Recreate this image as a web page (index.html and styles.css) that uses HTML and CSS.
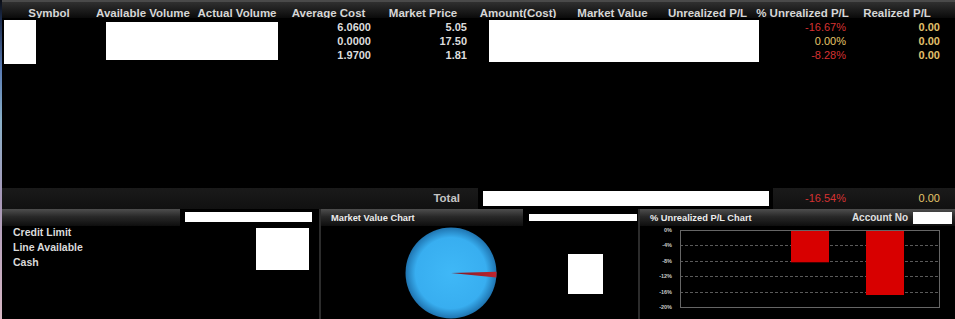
FILE: index.html
```html
<!DOCTYPE html>
<html lang="en">
<head>
    <meta charset="UTF-8">
    <meta name="viewport" content="width=device-width, initial-scale=1.0">
    <title>Portfolio</title>
    <link rel="stylesheet" href="styles.css">
</head>
<body>
<div class="app">

    <div class="cols thead">
        <div class="th">Symbol</div>
        <div class="th th-left">Available Volume</div>
        <div class="th">Actual Volume</div>
        <div class="th">Average Cost</div>
        <div class="th">Market Price</div>
        <div class="th">Amount(Cost)</div>
        <div class="th">Market Value</div>
        <div class="th">Unrealized P/L</div>
        <div class="th">% Unrealized P/L</div>
        <div class="th">Realized P/L</div>
    </div>

    <div class="cols tbody">
        <div class="mask mask-symbol"></div>
        <div class="mask mask-volume"></div>
        <div class="mask mask-amount"></div>

        <div class="num">6.0600</div>
        <div class="num">5.05</div>
        <div class="num neg">-16.67%</div>
        <div class="num gold">0.00</div>

        <div class="num">0.0000</div>
        <div class="num">17.50</div>
        <div class="num gold light">0.00%</div>
        <div class="num gold">0.00</div>

        <div class="num">1.9700</div>
        <div class="num">1.81</div>
        <div class="num neg">-8.28%</div>
        <div class="num gold">0.00</div>
    </div>

    <div class="cols total">
        <div class="total-label">Total</div>
        <div class="total-box"><div class="fill"></div></div>
        <div class="num neg">-16.54%</div>
        <div class="num gold light">0.00</div>
    </div>

    <div class="panels">
        <div class="panel p1">
            <div class="phead">
                <div class="bar"></div>
                <div class="slot slot-1"><div class="fill"></div></div>
            </div>
            <div class="pbody">
                <div class="labels">
                    <div>Credit Limit</div>
                    <div>Line Available</div>
                    <div>Cash</div>
                </div>
                <div class="fill box-credit"></div>
            </div>
        </div>

        <div class="panel p2">
            <div class="phead">
                <div class="bar bar-2">Market Value Chart</div>
                <div class="slot slot-2"><div class="fill"></div></div>
            </div>
            <div class="pbody">
                <svg class="pie" width="92" height="92" viewBox="0 0 92 92">
                    <defs>
                        <radialGradient id="pieFill" cx="50%" cy="50%" r="50%">
                            <stop offset="0" stop-color="#3fb8f7"/>
                            <stop offset="0.78" stop-color="#38aef0"/>
                            <stop offset="1" stop-color="#1f74b0"/>
                        </radialGradient>
                        <linearGradient id="sliceFill" x1="0" y1="0" x2="1" y2="0">
                            <stop offset="0" stop-color="#7a1a26"/>
                            <stop offset="1" stop-color="#c0242e"/>
                        </linearGradient>
                    </defs>
                    <circle cx="46" cy="46" r="45.5" fill="url(#pieFill)"/>
                    <path d="M46 46 L91.5 44.8 A45.5 45.5 0 0 1 91.2 50.5 Z" fill="url(#sliceFill)"/>
                </svg>
                <div class="fill box-pie"></div>
            </div>
        </div>

        <div class="panel p3">
            <div class="phead">
                <div class="bar bar-3">
                    <span>% Unrealized P/L Chart</span>
                    <span class="acct">Account No</span>
                    <div class="fill box-acct"></div>
                </div>
            </div>
            <div class="pbody">
                <div class="axis">
                    <div>0%</div>
                    <div>-4%</div>
                    <div>-8%</div>
                    <div>-12%</div>
                    <div>-16%</div>
                    <div>-20%</div>
                </div>
                <svg class="plot" width="262" height="80" viewBox="0 0 262 80">
                    <g stroke="#5a5a5a" stroke-width="1" stroke-dasharray="3 2">
                        <line x1="1" y1="16.5" x2="261" y2="16.5"/>
                        <line x1="1" y1="32.5" x2="261" y2="32.5"/>
                        <line x1="1" y1="47.5" x2="261" y2="47.5"/>
                        <line x1="1" y1="63.5" x2="261" y2="63.5"/>
                    </g>
                    <rect x="112" y="1" width="38" height="32.3" fill="#d80000"/>
                    <rect x="187" y="1" width="38" height="65" fill="#d80000"/>
                    <rect x="1.5" y="1.5" width="259" height="77" fill="none" stroke="#666"/>
                </svg>
            </div>
        </div>
    </div>

</div>
</body>
</html>
```

FILE: styles.css
```css
body {
    margin: 0;
    background: #000;
    font-family: "Liberation Sans", Arial, sans-serif;
    overflow: hidden;
}

.app {
    width: 955px;
    height: 319px;
    box-sizing: border-box;
    overflow: hidden;
    border-left: 2px solid;
    border-image: linear-gradient(#0a0c12 0, #1a2a4a 6%, #5a7cb4 22%, #8ab0c8 38%, #a898b8 62%, #d8b8c4 100%) 1;
}

.cols {
    display: grid;
    grid-template-columns: 94px 96px 90px 93px 96px 94px 95px 95px 95px 94px;
}

/* table header */
.thead {
    height: 16px;
    border-top: 2px solid #4a4a4a;
    background: linear-gradient(#303030, #0a0a0a);
    overflow: hidden;
    line-height: 22.5px;
    font-size: 11.5px;
    font-weight: bold;
    color: #d6d6d6;
}

.th {
    text-align: center;
    white-space: nowrap;
    overflow: hidden;
}

.th-left {
    text-align: left;
}

/* table rows */
.tbody {
    height: 170px;
    box-sizing: border-box;
    padding-top: 2px;
    grid-template-rows: repeat(3, 14px);
    align-content: start;
    font-size: 11px;
    font-weight: bold;
    line-height: 14px;
    color: #dcdcdc;
}

.num {
    text-align: right;
    padding-right: 4px;
    white-space: nowrap;
}

.neg {
    color: #d63232;
    font-weight: normal;
}

.gold {
    color: #e2c06c;
}

.gold.light {
    font-weight: normal;
    color: #e6c66a;
}

.mask,
.fill {
    background: #fff;
}

.mask {
    grid-row: 1 / span 3;
    align-self: start;
}

.mask-symbol {
    grid-column: 1;
    width: 32px;
    height: 44px;
    margin-left: 2px;
}

.mask-volume {
    grid-column: 2 / span 2;
    width: 172px;
    height: 38px;
    margin: 2px 0 0 10px;
}

.mask-amount {
    grid-column: 6 / span 3;
    width: 270px;
    height: 42px;
    margin-left: 18px;
}

/* total row */
.total {
    height: 21px;
    background: linear-gradient(#1a1a1a, #111);
    line-height: 21px;
    font-size: 11px;
    color: #ccc;
}

.total-label {
    grid-column: 5;
    text-align: right;
    padding-right: 11px;
    font-size: 11.5px;
    font-weight: bold;
    color: #c4c4c4;
}

.total-box {
    grid-column: 6 / span 3;
    width: 295px;
    height: 23px;
    margin: -1px 0 0 7px;
    box-sizing: border-box;
    padding: 4px 4px 4px 5px;
    background: #000;
}

.total-box .fill {
    height: 100%;
}

/* bottom panels */
.panels {
    display: flex;
    height: 110px;
}

.panel {
    display: flex;
    flex-direction: column;
    box-sizing: border-box;
}

.p1 {
    width: 317px;
}

.p2 {
    width: 319px;
    border-left: 2px solid #2c2c2c;
}

.p3 {
    flex: 1;
    border-left: 2px solid #2c2c2c;
}

.phead {
    display: flex;
    height: 17px;
}

.bar {
    flex: 1;
    display: flex;
    align-items: center;
    padding-left: 10px;
    background: linear-gradient(#4e4e4e, #282828 45%, #0e0e0e);
    font-size: 9.3px;
    font-weight: bold;
    color: #ececec;
    white-space: nowrap;
}

.bar-2 {
    flex: none;
    width: 192px;
}

.slot {
    background: #000;
}

.slot-1 {
    width: 139px;
}

.slot-1 .fill {
    width: 127px;
    height: 10px;
    margin: 3px 0 0 5px;
}

.slot-2 {
    flex: 1;
}

.slot-2 .fill {
    width: 108px;
    height: 7px;
    margin: 5px 0 0 6px;
}

.acct {
    margin-left: auto;
    font-size: 10px;
    color: #e0e0e0;
}

.box-acct {
    width: 39px;
    height: 12px;
    margin: 0 3px 0 5px;
}

.pbody {
    flex: 1;
    display: flex;
    align-items: flex-start;
}

.labels {
    margin: -1.5px 0 0 11px;
    font-size: 10.5px;
    font-weight: bold;
    line-height: 15.25px;
    color: #dadada;
}

.box-credit {
    width: 53px;
    height: 42px;
    margin: 2px 10px 0 auto;
}

.pie {
    margin: 1px 0 0 84px;
}

.box-pie {
    width: 35px;
    height: 40px;
    margin: 28px 0 0 71px;
}

.axis {
    width: 32px;
    height: 85px;
    margin-top: 0.5px;
    padding-right: 4px;
    display: flex;
    flex-direction: column;
    justify-content: space-between;
    text-align: right;
    font-size: 5.5px;
    font-weight: bold;
    line-height: 7px;
    color: #c8c8c8;
}

.plot {
    margin: 3px 0 0 3px;
}
```
